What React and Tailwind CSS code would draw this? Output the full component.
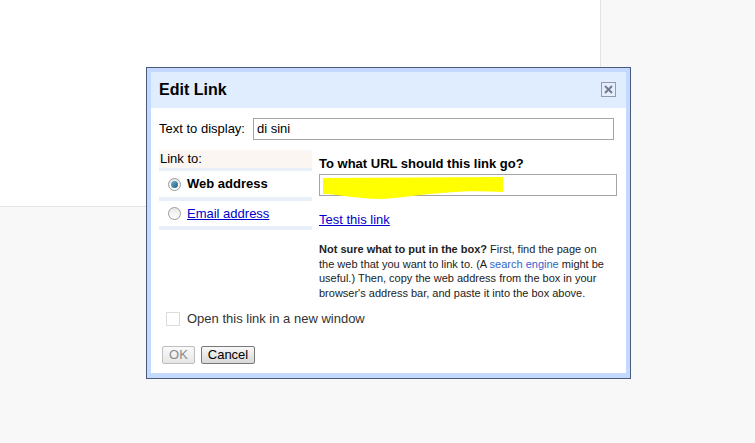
import React from "react";

const font = { fontFamily: '"Liberation Sans", Arial, sans-serif' };

function Radio({ checked }) {
  return (
    <span className="flex h-[13px] w-[13px] shrink-0 items-center justify-center rounded-full border border-[#9a9a9a] bg-gradient-to-b from-[#e8e8e8] to-[#ffffff]">
      {checked && (
        <span className="h-[7px] w-[7px] rounded-full bg-gradient-to-br from-[#6fb3cf] to-[#1f5f7f]" />
      )}
    </span>
  );
}

export default function App() {
  return (
    <div className="relative h-[443px] w-[755px] overflow-hidden bg-[#f8f8f8]" style={font}>
      <div className="h-[207px] w-[601px] border-b border-r border-[#e3e3e3] bg-white" />

      {/* Dialog */}
      <div className="absolute left-[146px] top-[67px] w-[485px] border border-[#4a5a7a] bg-[#c3d9ff] p-[4px] pb-[5px]">
        <div className="bg-white">
          {/* Title bar */}
          <div className="flex h-[36px] items-center justify-between bg-[#e0edfe] pl-[8px] pr-[10px]">
            <span className="text-[16px] font-bold text-black">Edit Link</span>
            <svg width="15" height="15" viewBox="0 0 15 15" className="mt-[-1px]">
              <rect x="0.5" y="0.5" width="14" height="14" fill="#e6eefb" stroke="#8e9cb3" />
              <path d="M4 4 L11 11 M11 4 L4 11" stroke="#6f7c93" strokeWidth="2" />
            </svg>
          </div>

          <div className="px-[8px] pb-[9px] pt-[10px] text-[13px] text-black">
            {/* Text to display */}
            <div className="flex items-center gap-[8px] pr-[4px]">
              <span>Text to display:</span>
              <div className="flex h-[22px] flex-1 items-center border border-[#a5a5a5] px-[3px]">di sini</div>
            </div>

            {/* Link to section */}
            <div className="mt-[10px] flex items-start gap-[7px] pr-[1px]">
              <div className="w-[153px] bg-[#e9eff8] pb-[4px]">
                <div className="h-[18px] bg-[#fcf6f2] pl-[1px] leading-[17px]">Link to:</div>
                <div className="mt-[3px] flex h-[26px] items-center gap-[6px] bg-white pl-[9px]">
                  <Radio checked />
                  <span className="font-bold">Web address</span>
                </div>
                <div className="mt-[4px] flex h-[25px] items-center gap-[6px] bg-white pl-[9px]">
                  <Radio />
                  <span className="text-[#0000cc] underline">Email address</span>
                </div>
              </div>

              <div className="flex-1 pt-[6px]">
                <div className="font-bold leading-[15px]">To what URL should this link go?</div>
                <div className="relative mt-[3px] h-[22px] border border-[#a5a5a5]">
                  <svg className="absolute left-[2px] top-[1px]" width="182" height="24" viewBox="0 0 182 24">
                    <path
                      d="M1 2 L181 1 L181 16 C160 15 140 15 120 17 C100 18 80 22 60 23 C45 23 30 21 15 19 C8 18 3 18 1 18 Z"
                      fill="#ffff00"
                    />
                  </svg>
                </div>
                <div className="mt-[16px] leading-[15px] text-[#0000cc] underline">Test this link</div>
                <div className="mt-[15px] pr-[8px] text-[11px] leading-[14.5px] text-[#222]">
                  <span className="font-bold">Not sure what to put in the box?</span> First, find the page on the web that you want to link to. (A{" "}
                  <span className="text-[#3366cc]">search engine</span> might be useful.) Then, copy the web address from the box in your browser's address bar, and paste it into the box above.
                </div>
              </div>
            </div>

            {/* Checkbox */}
            <div className="mt-[9px] flex items-center gap-[7px] pl-[7px]">
              <span className="h-[14px] w-[14px] border border-[#dcdcdc] bg-white" />
              <span className="text-[#333]">Open this link in a new window</span>
            </div>

            {/* Buttons */}
            <div className="mt-[17px] flex gap-[6px] pl-[3px]">
              <button className="flex h-[18px] w-[33px] items-center justify-center rounded-[2px] border border-[#bdbdbd] bg-gradient-to-b from-[#fafafa] to-[#e6e6e6] text-[13px] text-[#8a8a8a]">
                OK
              </button>
              <button className="flex h-[18px] w-[54px] items-center justify-center rounded-[2px] border border-[#777] bg-gradient-to-b from-[#f8f8f8] to-[#d8d8d8] text-[13px] text-black">
                Cancel
              </button>
            </div>
          </div>
        </div>
      </div>
    </div>
  );
}
